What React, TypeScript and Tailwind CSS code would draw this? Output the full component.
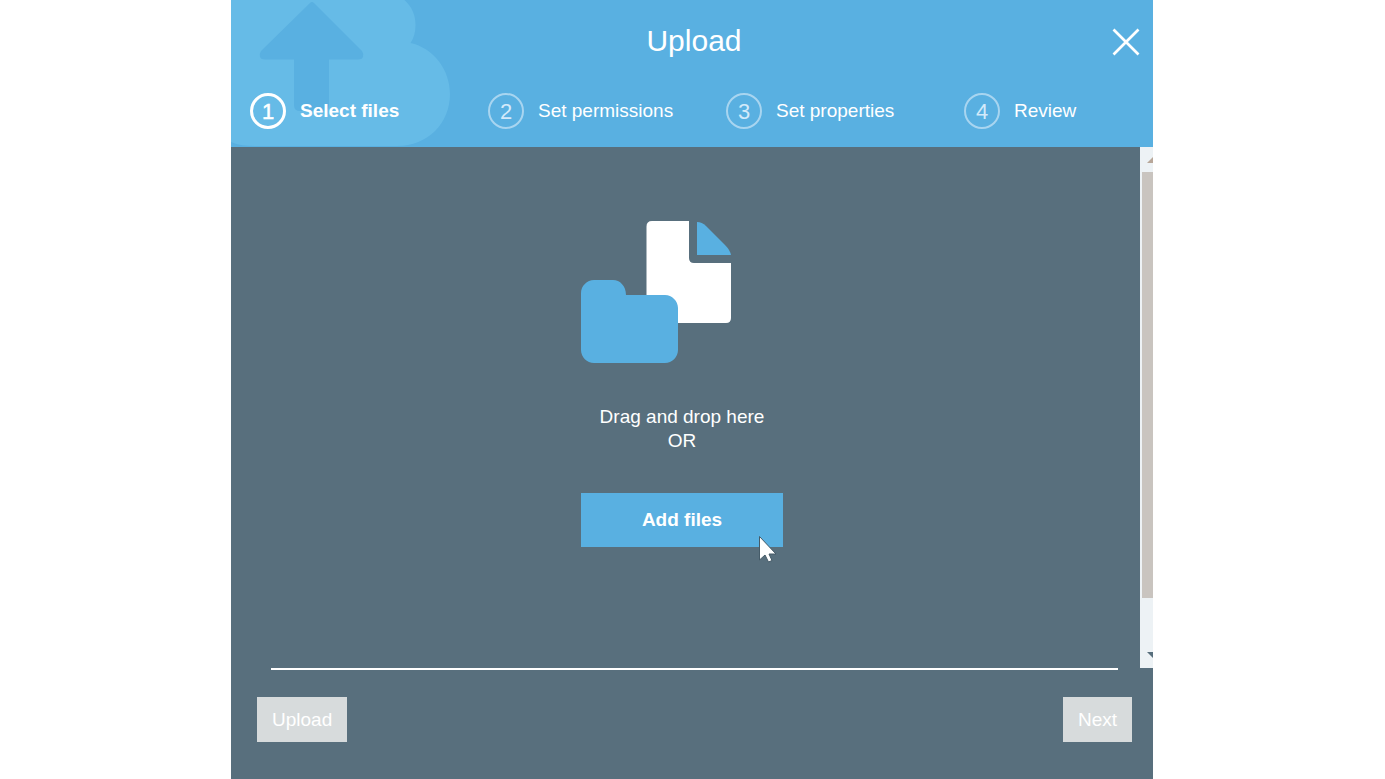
const steps = ['Select files', 'Set permissions', 'Set properties', 'Review'];

function CloudLogo() {
  return (
    <svg className="absolute left-0 top-0" width="220" height="147" viewBox="0 0 220 147" aria-hidden="true">
      <path
        fill="#66bbe7"
        d="M0 0H173.500C181 7 184.500 15 184.500 25C184.500 32 183 38 179.500 43C202 48 219 69 219 94C219 123 197 146 166 146H24C15 146 7 145 0 142Z"
      />
      <path
        fill="#59b0e1"
        d="M79 3Q81 1 83 3L131 51Q133 54 132 57Q131 59.500 127 59.500H98V105Q98 111 92 111H69Q63 111 63 105V59.500H34Q30 59.500 29 57Q28 54 30 51Z"
      />
    </svg>
  );
}

function FilesIcon() {
  return (
    <svg width="150" height="142" viewBox="0 0 150 142" aria-hidden="true">
      <path
        fill="#fff"
        d="M71 0H108V37Q108 42 113 42H150V97Q150 102 145 102H65.500V5.500Q65.500 0 71 0Z"
      />
      <path fill="#59b0e1" d="M116 1Q121 1 125 5L144 24Q149 29 150 34H116Z" />
      <path
        fill="#59b0e1"
        d="M13 59H32C39 59 45 65 45 74H84C91 74 97 80 97 87V129C97 136 91 142 84 142H13C6 142 0 136 0 129V72C0 65 6 59 13 59Z"
      />
    </svg>
  );
}

export default function App() {
  return (
    <div className="min-h-screen bg-white pr-px font-['Liberation_Sans',Arial,sans-serif] text-[19px] leading-6 text-white">
      <div
        role="dialog"
        aria-labelledby="dialog-title"
        className="mx-auto flex min-h-screen max-w-[922px] flex-col bg-[#586f7d]"
      >
        <header className="relative bg-[#59b0e1] pb-[18px]">
          <CloudLogo />
          <div className="relative grid h-[93px] grid-cols-[1fr_auto_1fr] items-start px-3 pt-[23px]">
            <h1 id="dialog-title" className="col-start-2 pl-1 text-[30px] leading-9">
              Upload
            </h1>
            <button type="button" aria-label="Close" className="mt-1 justify-self-end p-px">
              <svg width="28" height="28" viewBox="0 0 28 28" stroke="#fff" strokeWidth="2.700" aria-hidden="true">
                <path d="M1.500 1.500L26.500 26.500M26.500 1.500L1.500 26.500" />
              </svg>
            </button>
          </div>
          <ol className="relative grid grid-cols-[238px_238px_238px_1fr] pl-[19px]">
            {steps.map((step, i) => (
              <li
                key={step}
                aria-current={i === 0 ? 'step' : undefined}
                className={i === 0 ? 'flex items-center gap-[14px] font-bold' : 'flex items-center gap-[14px]'}
              >
                <span
                  className={
                    i === 0
                      ? 'flex size-9 items-center justify-center rounded-full border-3 border-white pt-0.5 text-[22px] font-normal [-webkit-text-stroke:0.5px_white]'
                      : 'flex size-9 items-center justify-center rounded-full border-2 border-[#a8d5f0] pt-0.5 text-[22px] text-[#d3eafa]'
                  }
                >
                  {i + 1}
                </span>
                <span className="whitespace-nowrap">{step}</span>
              </li>
            ))}
          </ol>
        </header>

        <main className="flex h-[521px]">
          <section className="flex flex-1 flex-col items-center pr-[7px] pt-[74px]">
            <div className="w-[202px]">
              <FilesIcon />
            </div>
            <p className="mt-[42px] text-center">
              Drag and drop here
              <br />
              OR
            </p>
            <div className="relative mt-10">
              <button type="button" className="h-[54px] w-[202px] bg-[#59b0e1] font-bold">
                Add files
              </button>
              <svg
                className="absolute left-[177px] top-[42px]"
                width="20"
                height="28"
                viewBox="0 0 20 28"
                aria-hidden="true"
              >
                <path
                  fill="#fff"
                  stroke="#455b68"
                  strokeWidth="1"
                  d="M1.500 1.500V25L7 20L10.500 27L14 25.500L11 19H18Z"
                />
              </svg>
            </div>
          </section>
          <div className="flex w-[13px] flex-col items-end bg-[#edf2f5]" aria-hidden="true">
            <svg width="13" height="25" viewBox="0 0 13 25">
              <path fill="#b8a799" d="M7 16L13 10V16Z" />
            </svg>
            <div className="h-[426px] w-[11px] bg-[#c9c4bf]" />
            <svg width="13" height="70" viewBox="0 0 13 70">
              <path fill="#586f7d" d="M7 54H13V60Z" />
            </svg>
          </div>
        </main>

        <footer className="px-[21px]">
          <hr className="ml-[19px] mr-[14px] border-t-2 border-white" />
          <div className="flex justify-between pl-[5px] pt-[27px]">
            <button type="button" className="h-[45px] bg-[#d7dbdc] px-[15px]">
              Upload
            </button>
            <button type="button" className="h-[45px] bg-[#d7dbdc] px-[15px]">
              Next
            </button>
          </div>
        </footer>
      </div>
    </div>
  );
}
